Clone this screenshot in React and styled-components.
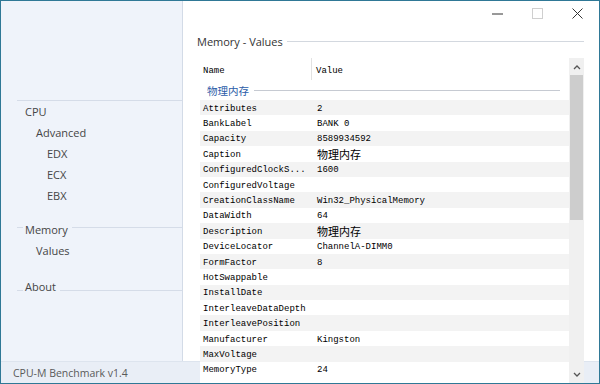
import React from "react";
import styled, { createGlobalStyle } from "styled-components";

const GlobalStyle = createGlobalStyle`
  html, body {
    margin: 0;
    padding: 0;
    background: #fff;
  }
  * {
    box-sizing: border-box;
  }
`;

const Window = styled.div`
  width: 600px;
  height: 384px;
  border: 1px solid #2f7896;
  display: grid;
  grid-template-columns: 182px 1fr;
  grid-template-rows: 1fr 22px;
  font-family: "Open Sans", "Noto Sans", sans-serif;
  overflow: hidden;
`;

const Sidebar = styled.div`
  grid-column: 1;
  grid-row: 1;
  background: #eff3fa;
  border-right: 1px solid #d3dbe7;
  padding-top: 99px;
`;

const Rule = styled.div`
  margin-left: 16px;
  border-top: 1px solid #d5dce8;
`;

const NavItem = styled.div`
  height: 21px;
  display: flex;
  align-items: center;
  padding-left: ${(p) => 24 + p.level * 11}px;
  font-size: 11px;
  color: #454545;
`;

const SectionHead = styled.div`
  height: 21px;
  display: flex;
  align-items: center;
  padding-left: 16px;
  margin-top: ${(p) => p.gap}px;
  font-size: 11px;
  color: #454545;

  &::before,
  &::after {
    content: "";
    align-self: flex-start;
    margin-top: ${(p) => p.lineTop}px;
    border-top: 1px solid #d5dce8;
  }
  &::before {
    width: 6px;
    margin-right: 2px;
  }
  &::after {
    flex: 1;
    margin-left: 4px;
  }
`;

const StatusBar = styled.div`
  grid-column: 1;
  grid-row: 2;
  background: #e9eef6;
  border-top: 1px solid #dde4ee;
  display: flex;
  align-items: center;
  padding: 1px 0 0 12px;
  font-size: 10.5px;
  color: #5a5a5a;
`;

const Main = styled.div`
  grid-column: 2;
  grid-row: 1 / 3;
  display: flex;
  flex-direction: column;
  min-height: 0;
  background: linear-gradient(
    to bottom,
    #fff calc(100% - 22px),
    #dde4ee calc(100% - 22px),
    #dde4ee calc(100% - 21px),
    #e9eef6 calc(100% - 21px)
  );
`;

const TitleBar = styled.div`
  height: 30px;
  display: flex;
  justify-content: flex-end;
  padding-right: 2px;
`;

const WinButton = styled.div`
  width: 40px;
  height: 24px;
  display: flex;
  align-items: center;
  justify-content: center;
`;

const PageTitle = styled.div`
  margin: 2px 15px 0 14px;
  height: 16px;
  display: flex;
  align-items: center;
  font-size: 11px;
  color: #333;

  &::after {
    content: "";
    flex: 1;
    margin-left: 4px;
    border-top: 1px solid #d3d8df;
  }
`;

const ListView = styled.div`
  flex: 1;
  min-height: 0;
  margin: 9px 15px 0 17px;
  display: grid;
  grid-template-columns: 1fr 15px;
  grid-template-rows: minmax(0, 1fr);
  background: #fff;
  overflow: hidden;
`;

const ListBody = styled.div`
  display: flex;
  flex-direction: column;
  min-height: 0;
  overflow: hidden;
`;

const HeaderRow = styled.div`
  height: 22px;
  flex-shrink: 0;
  display: grid;
  grid-template-columns: 112px 1fr;
  font-family: "Liberation Mono", monospace;
  font-size: 9px;
  color: #000;
`;

const HeaderCell = styled.div`
  display: flex;
  align-items: center;
  padding: 3px 0 0 ${(p) => (p.first ? 3 : 4)}px;
  border-right: ${(p) => (p.first ? "1px solid #e2e2e2" : "none")};
`;

const GroupRow = styled.div`
  height: 20px;
  flex-shrink: 0;
  display: flex;
  align-items: center;
  padding-left: 7px;
  padding-right: 9px;
  font-family: "Noto Sans CJK SC", sans-serif;
  font-size: 10.5px;
  color: #2b5ca8;

  &::after {
    content: "";
    flex: 1;
    margin-left: 5px;
    border-top: 1px solid #c6cad2;
  }
`;

const Row = styled.div`
  height: 15.4px;
  flex-shrink: 0;
  padding-top: 3px;
  display: grid;
  grid-template-columns: 113px 1fr;
  align-items: center;
  background: ${(p) => (p.striped ? "#f3f3f3" : "#fff")};
  color: #000;
  white-space: nowrap;
`;

const Cell = styled.div`
  padding-left: ${(p) => (p.first ? 3 : 4)}px;
  font-family: ${(p) =>
    p.cjk ? '"Noto Sans CJK SC", sans-serif' : '"Liberation Mono", monospace'};
  font-size: ${(p) => (p.cjk ? "11px" : "9px")};
  line-height: ${(p) => (p.cjk ? "11px" : "11px")};
  margin-top: ${(p) => (p.cjk ? "-1px" : "0")};
`;

const ScrollBar = styled.div`
  display: flex;
  flex-direction: column;
  background: #f0f0f0;
  min-height: 0;
`;

const ScrollArrow = styled.div`
  height: 17px;
  flex-shrink: 0;
  display: flex;
  align-items: center;
  justify-content: center;
`;

const Thumb = styled.div`
  height: 145px;
  flex-shrink: 0;
  margin: 0 1px;
  background: #cdcdcd;
`;

const Track = styled.div`
  flex: 1;
  min-height: 0;
`;

const rows = [
  ["Attributes", "2"],
  ["BankLabel", "BANK 0"],
  ["Capacity", "8589934592"],
  ["Caption", "物理内存", true],
  ["ConfiguredClockS...", "1600"],
  ["ConfiguredVoltage", ""],
  ["CreationClassName", "Win32_PhysicalMemory"],
  ["DataWidth", "64"],
  ["Description", "物理内存", true],
  ["DeviceLocator", "ChannelA-DIMM0"],
  ["FormFactor", "8"],
  ["HotSwappable", ""],
  ["InstallDate", ""],
  ["InterleaveDataDepth", ""],
  ["InterleavePosition", ""],
  ["Manufacturer", "Kingston"],
  ["MaxVoltage", ""],
  ["MemoryType", "24"],
];

function Chevron({ up }) {
  return (
    <svg width="8" height="6" viewBox="0 0 8 6">
      <path
        d={up ? "M1 5 L4 2 L7 5" : "M1 1 L4 4 L7 1"}
        fill="none"
        stroke="#555"
        strokeWidth="1.3"
      />
    </svg>
  );
}

export default function App() {
  return (
    <>
      <GlobalStyle />
      <Window>
        <Sidebar>
          <Rule />
          <NavItem level={0}>CPU</NavItem>
          <NavItem level={1}>Advanced</NavItem>
          <NavItem level={2}>EDX</NavItem>
          <NavItem level={2}>ECX</NavItem>
          <NavItem level={2}>EBX</NavItem>
          <SectionHead gap={13} lineTop={8}>
            Memory
          </SectionHead>
          <NavItem level={1}>Values</NavItem>
          <SectionHead gap={15} lineTop={14}>
            About
          </SectionHead>
        </Sidebar>

        <StatusBar>CPU-M Benchmark v1.4</StatusBar>

        <Main>
          <TitleBar>
            <WinButton>
              <svg width="11" height="11" viewBox="0 0 11 11">
                <path d="M0 6 H11" stroke="#333" strokeWidth="1" />
              </svg>
            </WinButton>
            <WinButton>
              <svg width="11" height="11" viewBox="0 0 11 11">
                <rect x="0.5" y="0.5" width="10" height="10" fill="none" stroke="#cfcfcf" />
              </svg>
            </WinButton>
            <WinButton>
              <svg width="11" height="11" viewBox="0 0 11 11">
                <path d="M0.5 0.5 L10.5 10.5 M10.5 0.5 L0.5 10.5" stroke="#333" strokeWidth="1" />
              </svg>
            </WinButton>
          </TitleBar>

          <PageTitle>Memory - Values</PageTitle>

          <ListView>
            <ListBody>
              <HeaderRow>
                <HeaderCell first>Name</HeaderCell>
                <HeaderCell>Value</HeaderCell>
              </HeaderRow>
              <GroupRow>物理内存</GroupRow>
              {rows.map(([name, value, cjk], i) => (
                <Row key={name} striped={i % 2 === 0}>
                  <Cell first>{name}</Cell>
                  <Cell cjk={cjk}>{value}</Cell>
                </Row>
              ))}
            </ListBody>
            <ScrollBar>
              <ScrollArrow>
                <Chevron up />
              </ScrollArrow>
              <Thumb />
              <Track />
              <ScrollArrow>
                <Chevron />
              </ScrollArrow>
            </ScrollBar>
          </ListView>
        </Main>
      </Window>
    </>
  );
}
